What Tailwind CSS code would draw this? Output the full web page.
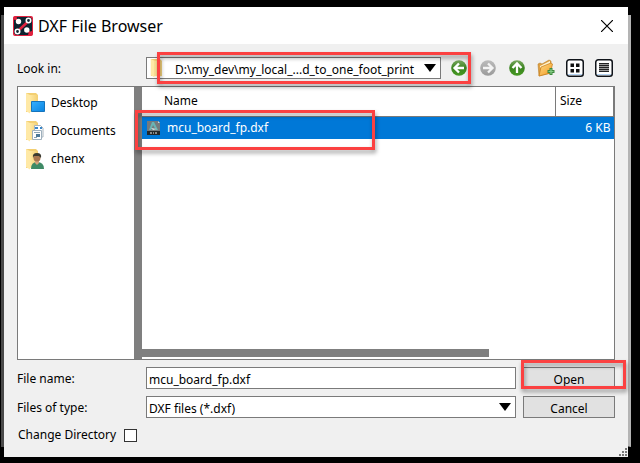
<!DOCTYPE html>
<html lang="en">
<head>
<meta charset="utf-8">
<meta name="viewport" content="width=device-width, initial-scale=1">
<title>DXF File Browser</title>
<script src="https://cdn.jsdelivr.net/npm/@tailwindcss/browser@4"></script>
</head>
<body class="relative flex h-screen flex-col bg-black pt-[7px] pr-3 pb-[6px] pl-1 font-['Noto_Sans','Open_Sans',sans-serif] text-xs leading-5 text-black">
<!-- parent window edges showing behind the dialog -->
<div class="absolute top-[15px] right-[9px] bottom-4 left-px border-x-[3px] border-b border-[#4a4a4a] border-r-[#b4b4b4]"></div>

<svg class="absolute size-0" aria-hidden="true">
  <defs>
    <linearGradient id="green" x1="0" y1="0" x2="0" y2="1"><stop offset="0" stop-color="#7aa860"/><stop offset=".5" stop-color="#3b8420"/><stop offset="1" stop-color="#479a22"/></linearGradient>
    <linearGradient id="grey" x1="0" y1="0" x2="0" y2="1"><stop offset="0" stop-color="#bcbcbc"/><stop offset="1" stop-color="#9a9a9a"/></linearGradient>
    <linearGradient id="orange" x1="0" y1="0" x2="1" y2="1"><stop offset="0" stop-color="#fdd98a"/><stop offset="1" stop-color="#f39a1c"/></linearGradient>
    <linearGradient id="yellow" x1="0" y1="0" x2="1" y2="0"><stop offset="0" stop-color="#ffe8a0"/><stop offset="1" stop-color="#f3cf72"/></linearGradient>
    <linearGradient id="blue" x1="0" y1="0" x2="1" y2="1"><stop offset="0" stop-color="#35b0ff"/><stop offset="1" stop-color="#0a84e0"/></linearGradient>
    <symbol id="folder" viewBox="0 0 20 22"><path d="M1 1h10l2 2v17H1z" fill="#f3cf72"/><path d="M1 1l4 2v18.500L1 19z" fill="#ffe9a6"/><path d="M5 3h8v17H5z" fill="url(#yellow)"/></symbol>
  </defs>
</svg>

<main class="relative flex min-h-0 flex-1 flex-col bg-[#f0f0f0]">
  <header class="flex h-[37px] shrink-0 items-center bg-white pr-[11px] pl-[9px]">
    <svg class="size-5" viewBox="0 0 20 20">
      <rect width="20" height="20" rx="2" fill="#e0223f"/>
      <path d="M1 4l2-1 1-2h13l2 2v12l-3 1-1 3H3l-2-2z" fill="#0c2430"/>
      <path d="M1 1l4 4M15 15l4 4" stroke="#e0223f" stroke-width="2"/>
      <path d="M6.500 13.500L14 6.500" stroke="#e0223f" stroke-width="2.400"/>
      <circle cx="5.500" cy="5.500" r="2.700" fill="#fff"/><circle cx="13.800" cy="14" r="2.700" fill="#fff"/>
      <circle cx="15.500" cy="4.500" r="2.200" fill="#0c2430" stroke="#fff" stroke-width="1.600"/><circle cx="4.500" cy="15.500" r="2.200" fill="#0c2430" stroke="#fff" stroke-width="1.600"/>
    </svg>
    <h1 class="ml-[5px] flex-1 text-base">DXF File Browser</h1>
    <button class="p-1" aria-label="Close"><svg class="size-3" viewBox="0 0 12 12"><path d="M0 0l12 12M12 0L0 12" stroke="#000" stroke-width="1.200"/></svg></button>
  </header>

  <form class="flex min-h-0 flex-1 flex-col gap-[7px] px-[13px] pt-[13px] pb-3" onsubmit="return false">
    <div class="flex items-center">
      <label for="look" class="w-[129px] shrink-0 pt-[2px]">Look in:</label>
      <div class="relative flex min-w-0 flex-1 items-center gap-2">
        <div class="relative min-w-0 flex-1">
          <select id="look" class="block h-[22px] w-full appearance-none border border-[#7a7a7a] bg-white pt-[2px] pl-7 leading-5"><option>D:\my_dev\my_local_...d_to_one_foot_print</option></select>
          <svg class="pointer-events-none absolute top-px left-1 h-5 w-[18px]" viewBox="0 0 20 22"><use href="#folder"/></svg>
          <svg class="pointer-events-none absolute top-[7px] right-[5px] h-2 w-3" viewBox="0 0 12 8"><path d="M0 0h12L6 8z"/></svg>
        </div>
        <button type="button" class="size-5" aria-label="Back"><svg viewBox="0 0 20 20"><circle cx="10" cy="10" r="7.800" fill="url(#green)"/><path d="M15 10H7M10 5.500L5.500 10l4.500 4.500" fill="none" stroke="#fff" stroke-width="2.300"/></svg></button>
        <div class="pointer-events-none absolute -top-[5px] -right-[2px] -bottom-[5px] left-[11px] border-3 border-[#fb4141] drop-shadow-[1px_3px_2px_rgba(0,0,0,0.4)]"></div>
      </div>
      <div class="ml-[9px] flex gap-[9px] pr-px">
        <button type="button" class="size-5" aria-label="Forward"><svg viewBox="0 0 20 20"><circle cx="10" cy="10" r="7.800" fill="url(#grey)"/><path d="M5 10h8M10 5.500l4.500 4.500-4.500 4.500" fill="none" stroke="#f4f4f4" stroke-width="2.300"/></svg></button>
        <button type="button" class="size-5" aria-label="Parent directory"><svg viewBox="0 0 20 20"><circle cx="10" cy="10" r="7.800" fill="url(#green)"/><path d="M10 15V7M5.500 10L10 5.500l4.500 4.500" fill="none" stroke="#fff" stroke-width="2.300"/></svg></button>
        <button type="button" class="size-5" aria-label="Create new folder"><svg viewBox="0 0 20 20"><path d="M2 6l2-1 2 1 7-4 2 1v12L3 18z" fill="#e0a040" stroke="#b8802c" stroke-width=".6"/><path d="M4 8l10-5v3L4 10z" fill="#fff3d0"/><path d="M5 9l10-4 1.500 1-2 9L3 18z" fill="url(#orange)" stroke="#c67b18" stroke-width=".7"/><path d="M15 10v7M11.500 13.500h7" stroke="#3f8a3f" stroke-width="3"/><path d="M15 11v5M12.500 13.500h5" stroke="#86cc86" stroke-width="1.200"/></svg></button>
        <button type="button" class="size-5" aria-label="List view"><svg viewBox="0 0 20 20"><rect x="1.750" y="1.750" width="16.500" height="16.500" rx="2.500" fill="#fff" stroke="#10141a" stroke-width="1.500"/><path d="M3 16.500h14" stroke="#b5d5f5"/><path d="M5.500 5.500H9V9H5.500zM11 5.500h3.500V9H11zM5.500 11H9v3.500H5.500zM11 11h3.500v3.500H11z" fill="#111"/></svg></button>
        <button type="button" class="size-5" aria-label="Detail view"><svg viewBox="0 0 20 20"><rect x="1.750" y="1.750" width="16.500" height="16.500" rx="2.500" fill="#fff" stroke="#10141a" stroke-width="1.500"/><path d="M3 16.500h14" stroke="#b5d5f5"/><path d="M5 5h10v9H5z" fill="#999"/><path d="M5 5.500h10M5 7.500h10M5 9.500h10M5 11.500h10M5 13.500h10" stroke="#222"/></svg></button>
      </div>
    </div>

    <section class="flex min-h-0 flex-1 border border-[#7a7a7a] bg-white">
      <nav class="w-29 shrink-0 pt-[2px] pl-[7px]">
        <a href="#" class="flex h-7 items-center gap-[6px]"><svg class="h-[22px] w-5" viewBox="0 0 20 22"><use href="#folder"/><path d="M6.500 9.500h13v10h-13z" fill="url(#blue)" stroke="#1574bd"/></svg>Desktop</a>
        <a href="#" class="flex h-7 items-center gap-[6px]"><svg class="h-[22px] w-5" viewBox="0 0 20 22"><use href="#folder"/><path d="M9.500 5.500h6l2.500 2.500v9H9.500z" fill="#fff" stroke="#a8b4bd"/><path d="M10 8h3M15 8h2" stroke="#3a86c8" stroke-width="2"/><path d="M7.500 10.500h9v9h-9z" fill="#fff" stroke="#9eb0bd"/><path d="M9 12.500h6M9 17.500h3" stroke="#8ba4b5"/><path d="M11 14h4v3h-4z" fill="#4c7897"/></svg>Documents</a>
        <a href="#" class="flex h-7 items-center gap-[6px]"><svg class="h-[22px] w-5" viewBox="0 0 20 22"><use href="#folder"/><path d="M6 21q0-7 6-7 7 0 7 7z" fill="#3f8a66"/><path d="M10 12h4v3l-2 2-2-2z" fill="#d5a27b"/><circle cx="12" cy="10" r="3.500" fill="#a87650"/><path d="M8 10q-1-5 4-5t4 5l-2-2H9z" fill="#3b3b30"/></svg>chenx</a>
      </nav>
      <div class="w-2 shrink-0 bg-[#7f7f7f]"></div>
      <div class="relative flex min-w-0 flex-1 flex-col">
        <table class="w-full table-fixed border-collapse">
          <thead><tr class="h-[29px] border-b border-[#7a7a7a]"><th class="pl-[22px] text-left font-normal">Name</th><th class="w-[58px] border-x border-[#7a7a7a] pl-1 text-left font-normal">Size</th></tr></thead>
          <tbody><tr class="h-[23px] bg-[#0078d7] text-white"><td><span class="flex items-center gap-[6px] pl-1"><svg class="h-4 w-[15px]" viewBox="0 0 15 16"><path d="M1 1h11l2 2v12H1z" fill="#747a7d"/><path d="M12 1v2h2" fill="#ced3d5"/><path d="M3 10L6 2h2l4 8h-2L7 5l-2 5z" fill="#68b5b5"/><path d="M5 8l6 1-4 1z" fill="#d2e8e8"/><path d="M1 11h13v4H1z" fill="#242729"/><path d="M4 13h2M7 13h1M9 13h2" stroke="#eee"/></svg>mcu_board_fp.dxf</span></td><td class="pr-[3px] text-right">6 KB</td></tr></tbody>
        </table>
        <div class="mt-auto mb-[2px] h-2 w-[73.500%] bg-[#7f7f7f]"></div>
        <div class="pointer-events-none absolute top-[23px] -left-[7px] h-10 w-60 border-3 border-[#fb4141] drop-shadow-[1px_3px_2px_rgba(0,0,0,0.4)]"></div>
      </div>
    </section>

    <div class="grid grid-cols-[129px_minmax(0,1fr)_92px] items-center gap-y-[7px]">
      <label for="name" class="pt-[2px]">File name:</label>
      <input id="name" type="text" value="mcu_board_fp.dxf" class="mr-[7px] h-[22px] min-w-0 border border-[#7a7a7a] bg-white px-[2px] pt-[2px] leading-5">
      <div class="relative">
        <button class="block h-[22px] w-full border border-[#7a7a7a] bg-[#e1e1e1] pt-[2px] leading-5">Open</button>
        <div class="pointer-events-none absolute -top-[7px] -right-[11px] bottom-0 -left-[2px] border-3 border-[#fb4141] drop-shadow-[1px_3px_2px_rgba(0,0,0,0.4)]"></div>
      </div>
      <label for="type" class="pt-[2px]">Files of type:</label>
      <div class="relative mr-[7px]">
        <select id="type" class="block h-[22px] w-full appearance-none border border-[#7a7a7a] bg-white pt-[2px] pl-[2px] leading-5"><option>DXF files (*.dxf)</option></select>
        <svg class="pointer-events-none absolute top-[7px] right-[5px] h-2 w-3" viewBox="0 0 12 8"><path d="M0 0h12L6 8z"/></svg>
      </div>
      <button type="button" class="h-[22px] border border-[#7a7a7a] bg-[#e1e1e1] pt-[2px] leading-5">Cancel</button>
    </div>
    <label class="flex items-center gap-2 pl-px">Change Directory <input type="checkbox" class="size-[13px] appearance-none border border-[#333] bg-white"></label>
  </form>
  <svg class="absolute right-0 bottom-0 size-[10px]" viewBox="0 0 10 10"><path d="M7 1h2v2H7zM4 4h2v2H4zM7 4h2v2H7zM1 7h2v2H1zM4 7h2v2H4zM7 7h2v2H7z" fill="#777"/></svg>
</main>
</body>
</html>
